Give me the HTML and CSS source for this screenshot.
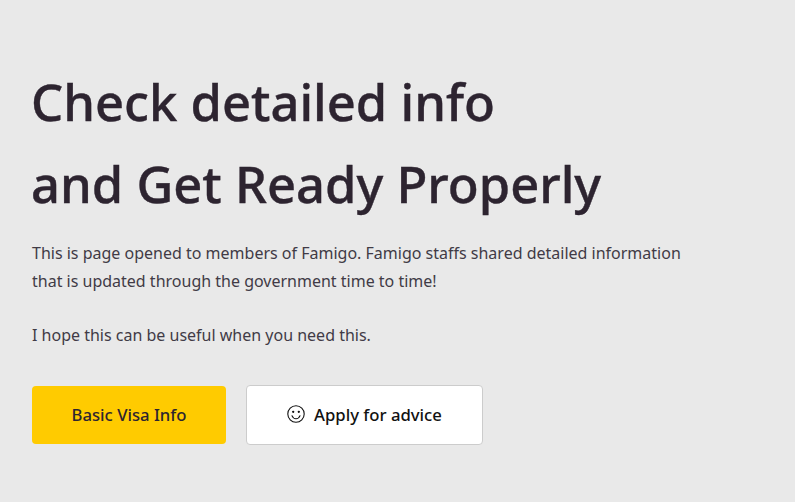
FILE: index.html
```html
<!DOCTYPE html>
<html lang="en">
  <head>
    <meta charset="UTF-8" />
    <title>Famigo</title>
    <link rel="stylesheet" href="styles.css">
  </head>
  <body>
    <section class="intro">
      <h1>Check detailed info<br />and Get Ready Properly</h1>
      <p>This is page opened to members of Famigo. Famigo staffs shared detailed information<br />that is updated through the government time to time!</p>
      <p>I hope this can be useful when you need this.</p>
      <div class="actions">
        <a class="btn btn-primary">Basic Visa Info</a>
        <a class="btn btn-outline">
          <svg class="smile" width="18" height="18" viewBox="0 0 18 18" fill="none" stroke="#111" stroke-width="1.1">
            <circle cx="9" cy="9" r="8.2" />
            <circle cx="6.2" cy="6.8" r=".6" fill="#111" />
            <circle cx="11.8" cy="6.8" r=".6" fill="#111" />
            <path d="M4.8 10.4c1 2.4 2.6 3.4 4.2 3.4s3.2-1 4.2-3.4" />
          </svg>
          Apply for advice
        </a>
      </div>
    </section>
  </body>
</html>
```

FILE: styles.css
```css
body {
  margin: 0;
  background-color: #e9e9e9;
  font-family: "Noto Sans", sans-serif;
  color: #2d2430;
}
.intro {
  padding: 61px 32px 0;
}
h1 {
  margin: 0 0 14px -1px;
  font-size: 50.7px;
  line-height: 82px;
  font-weight: 500;
  -webkit-text-stroke: 0.4px #2d2430;
}
p {
  margin: 0 0 26px;
  font-size: 16px;
  line-height: 28px;
  color: #413b46;
}
.actions {
  display: flex;
  gap: 20px;
  margin-top: 37px;
}
.btn {
  display: flex;
  align-items: center;
  justify-content: center;
  height: 58px;
  box-sizing: border-box;
  padding-bottom: 2px;
  border-radius: 4px;
  font-size: 16.7px;
  font-weight: 500;
}
.btn-primary {
  width: 194px;
  background-color: #ffcb00;
}
.btn-outline {
  width: 237px;
  height: 60px;
  margin-top: -1px;
  gap: 9px;
  background-color: white;
  border: 1px solid #ccc;
  color: #111;
}
```
